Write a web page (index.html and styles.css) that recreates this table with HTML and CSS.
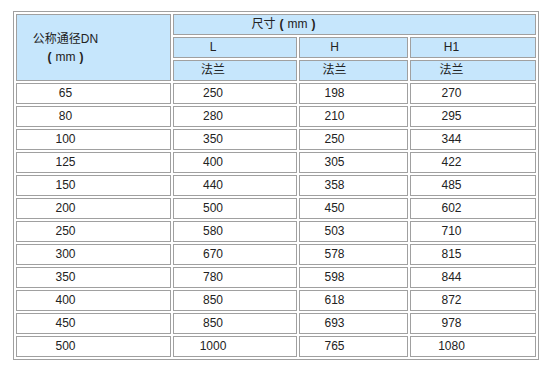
FILE: index.html
```html
<!DOCTYPE html>
<html lang="zh">
<head>
<meta charset="utf-8">
<title>尺寸表</title>
<link rel="stylesheet" href="styles.css">
</head>
<body>
<table class="spec">
  <thead>
    <tr>
      <th class="c1 head-dn" rowspan="3">公称通径DN<br><span class="paren">(</span>mm<span class="paren">)</span></th>
      <th class="span" colspan="3">尺寸<span class="paren">(</span>mm<span class="paren">)</span></th>
    </tr>
    <tr>
      <th class="c2">L</th>
      <th class="c3">H</th>
      <th class="c4">H1</th>
    </tr>
    <tr>
      <th class="c2">法兰</th>
      <th class="c3">法兰</th>
      <th class="c4">法兰</th>
    </tr>
  </thead>
  <tbody>
    <tr><td class="c1">65</td><td class="c2">250</td><td class="c3">198</td><td class="c4">270</td></tr>
    <tr><td class="c1">80</td><td class="c2">280</td><td class="c3">210</td><td class="c4">295</td></tr>
    <tr><td class="c1">100</td><td class="c2">350</td><td class="c3">250</td><td class="c4">344</td></tr>
    <tr><td class="c1">125</td><td class="c2">400</td><td class="c3">305</td><td class="c4">422</td></tr>
    <tr><td class="c1">150</td><td class="c2">440</td><td class="c3">358</td><td class="c4">485</td></tr>
    <tr><td class="c1">200</td><td class="c2">500</td><td class="c3">450</td><td class="c4">602</td></tr>
    <tr><td class="c1">250</td><td class="c2">580</td><td class="c3">503</td><td class="c4">710</td></tr>
    <tr><td class="c1">300</td><td class="c2">670</td><td class="c3">578</td><td class="c4">815</td></tr>
    <tr><td class="c1">350</td><td class="c2">780</td><td class="c3">598</td><td class="c4">844</td></tr>
    <tr><td class="c1">400</td><td class="c2">850</td><td class="c3">618</td><td class="c4">872</td></tr>
    <tr><td class="c1">450</td><td class="c2">850</td><td class="c3">693</td><td class="c4">978</td></tr>
    <tr><td class="c1">500</td><td class="c2">1000</td><td class="c3">765</td><td class="c4">1080</td></tr>
  </tbody>
</table>
</body>
</html>
```
FILE: styles.css
```css
html, body {
  margin: 0;
  padding: 0;
  background: #ffffff;
}

body {
  padding: 11px 0 0 13px;
  font-family: "Liberation Sans", Arial, "Noto Sans CJK SC", sans-serif;
  font-size: 12px;
  color: #222222;
}

.spec {
  border: 1px solid #a0a0a0;
  border-spacing: 2px;
  border-collapse: separate;
}

.spec th,
.spec td {
  box-sizing: border-box;
  height: 21px;
  padding: 0;
  border: 1px solid #a0a0a0;
  line-height: 19px;
  text-align: center;
  vertical-align: middle;
  font-weight: normal;
  white-space: nowrap;
}

.spec th {
  background: #c6e6fc;
}

.spec td {
  background: #ffffff;
}

.paren {
  display: inline-block;
  width: 12px;
  text-align: center;
  font-weight: bold;
}

.c1 { width: 155px; padding-right: 56px !important; }
.c2 { width: 124px; padding-right: 44px !important; }
.c3 { width: 109px; padding-right: 38px !important; }
.c4 { width: 126px; padding-right: 43px !important; }

.spec .span {
  padding-right: 138px;
}

.spec .head-dn {
  line-height: 18px;
}
```
